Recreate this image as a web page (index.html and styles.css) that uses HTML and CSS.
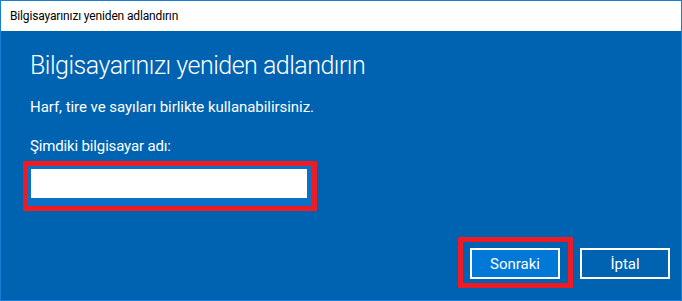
FILE: index.html
```html
<!DOCTYPE html>
<html>
<head>
  <meta charset="utf-8">
  <title>Bilgisayarınızı yeniden adlandırın</title>
  <link rel="stylesheet" href="styles.css">
</head>
<body>
  <div class="window">
    <div class="titlebar">Bilgisayarınızı yeniden adlandırın</div>
    <div class="content">
      <h1 class="heading">Bilgisayarınızı yeniden adlandırın</h1>
      <p class="hint">Harf, tire ve sayıları birlikte kullanabilirsiniz.</p>
      <label class="label" for="pcName">Şimdiki bilgisayar adı:</label>
      <div class="mark mark-input">
        <div class="field">
          <input type="text" id="pcName" value="">
        </div>
      </div>
      <div class="actions">
        <div class="mark mark-button">
          <button class="btn btn-primary">Sonraki</button>
        </div>
        <button class="btn">İptal</button>
      </div>
    </div>
  </div>
</body>
</html>
```

FILE: styles.css
```css
body {
  margin: 0;
  padding: 0;
  font-family: Roboto, "Noto Sans", sans-serif;
}

.window {
  width: 682px;
  height: 301px;
  box-sizing: border-box;
  border: 1px solid #1a7fd4;
  display: flex;
  flex-direction: column;
}

.titlebar {
  height: 30px;
  line-height: 30px;
  padding-left: 9px;
  background-color: #fff;
  color: #000;
  font-size: 12px;
  letter-spacing: -0.15px;
}

.content {
  flex: 1;
  background-color: #0063b1;
  color: #fff;
  padding: 0 11px 0 22px;
  display: flex;
  flex-direction: column;
}

.heading {
  margin: 18px 0 0 7px;
  font-size: 25px;
  font-weight: 300;
  line-height: 34px;
  letter-spacing: -0.5px;
}

.hint {
  margin: 14px 0 0 7px;
  font-size: 15px;
  line-height: 20px;
  letter-spacing: -0.05px;
}

.label {
  margin: 19px 0 0 7px;
  font-size: 15px;
  line-height: 20px;
  letter-spacing: -0.15px;
}

.mark {
  border: 5px solid #ed1c24;
}

.mark-input {
  width: 284px;
  margin-top: 5px;
}

.field {
  background-color: #0b70c6;
  padding: 3px 5px 8px 3px;
}

.field input {
  display: block;
  width: 100%;
  height: 29px;
  box-sizing: border-box;
  border: none;
  padding: 0 6px;
  font-family: inherit;
  font-size: 15px;
  outline: none;
}

.actions {
  margin-top: 26px;
  display: flex;
  justify-content: flex-end;
  align-items: flex-start;
}

.mark-button {
  padding: 6px 8px 4px 7px;
  margin-right: 7px;
}

.btn {
  width: 90px;
  height: 31px;
  box-sizing: border-box;
  border: 2px solid #fff;
  background-color: #0063b1;
  color: #fff;
  font-family: inherit;
  font-size: 15px;
  padding: 0;
}

.actions > .btn {
  margin-top: 11px;
}

.btn-primary {
  display: block;
  background-color: #0078d7;
}
```
